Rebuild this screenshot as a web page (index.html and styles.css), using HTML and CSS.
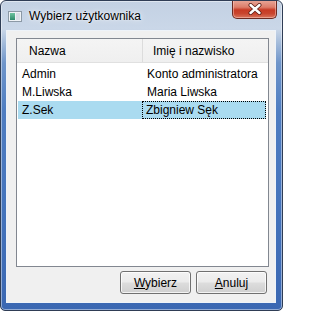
FILE: index.html
```html
<!DOCTYPE html>
<html lang="pl">
<head>
<meta charset="utf-8">
<title>Wybierz użytkownika</title>
<link rel="stylesheet" href="styles.css">
</head>
<body>
<div class="window">
  <div class="titlebar">
    <svg class="app-icon" width="14" height="11" viewBox="0 0 14 11">
      <defs>
        <linearGradient id="g1" x1="0" y1="0" x2="0" y2="1">
          <stop offset="0" stop-color="#6fc4a0"/>
          <stop offset="1" stop-color="#2e8a6a"/>
        </linearGradient>
      </defs>
      <rect x="0.5" y="0.5" width="13" height="10" fill="#eef2f6" stroke="#8c99a6"/>
      <rect x="2" y="2" width="5" height="7" fill="url(#g1)"/>
      <rect x="8" y="2" width="4" height="7" fill="#d8dee5"/>
    </svg>
    <span class="title">Wybierz użytkownika</span>
    <div class="close">
      <svg width="14" height="12" viewBox="0 0 14 12">
        <path d="M2.5 2 L11.5 10 M11.5 2 L2.5 10" stroke="#5a1c14" stroke-width="4" stroke-linecap="round" fill="none"/>
        <path d="M2.5 2 L11.5 10 M11.5 2 L2.5 10" stroke="#ffffff" stroke-width="2.4" stroke-linecap="round" fill="none"/>
      </svg>
    </div>
  </div>
  <div class="client">
    <div class="list">
      <div class="header">
        <div class="hcol hcol1">Nazwa</div>
        <div class="hcol hcol2">Imię i nazwisko</div>
      </div>
      <div class="rows">
        <div class="row">
          <div class="cell c1">Admin</div>
          <div class="cell c2">Konto administratora</div>
        </div>
        <div class="row">
          <div class="cell c1">M.Liwska</div>
          <div class="cell c2">Maria Liwska</div>
        </div>
        <div class="row selected">
          <div class="cell c1">Z.Sek</div>
          <div class="cell c2 focus">Zbigniew Sęk</div>
        </div>
      </div>
    </div>
    <div class="buttons">
      <button class="btn"><u>W</u>ybierz</button>
      <button class="btn"><u>A</u>nuluj</button>
    </div>
  </div>
</div>
</body>
</html>
```
FILE: styles.css
```css
html, body {
  margin: 0;
  padding: 0;
  background: #ffffff;
}

body {
  width: 283px;
  height: 311px;
  font-family: "Liberation Sans", Arial, sans-serif;
  font-size: 12px;
  color: #000;
}

.window {
  box-sizing: border-box;
  width: 283px;
  height: 311px;
  border: 1px solid #2f3d55;
  border-radius: 6px 6px 5px 5px;
  display: flex;
  flex-direction: column;
  overflow: hidden;
  background: linear-gradient(to bottom,
    #c3d1e3 0px,
    #cad7e8 28px,
    #a9bfdc 40px,
    #6f95ca 62px,
    #4f7dc1 110px,
    #4574bc 200px,
    #3a67b2 311px);
  box-shadow: inset 0 0 0 1px rgba(255,255,255,0.45);
}

.titlebar {
  height: 29px;
  flex: none;
  display: flex;
  align-items: center;
  padding-left: 7px;
}

.app-icon {
  flex: none;
  margin-top: 1px;
}

.title {
  margin-left: 7px;
  font-size: 12px;
  color: #000;
  text-shadow: 0 0 6px rgba(255,255,255,0.9), 0 0 2px rgba(255,255,255,0.8);
}

.close {
  margin-left: auto;
  margin-right: 5px;
  align-self: flex-start;
  margin-top: -1px;
  width: 45px;
  height: 19px;
  box-sizing: border-box;
  border: 1px solid #6b2a22;
  border-top: none;
  border-radius: 0 0 5px 5px;
  background: linear-gradient(to bottom, #e9a99a 0%, #dc7d6a 40%, #c73a24 55%, #c9452e 75%, #d9755d 100%);
  box-shadow: inset 0 0 0 1px rgba(255,220,210,0.45);
  display: flex;
  align-items: center;
  justify-content: center;
}

.client {
  flex: 1;
  margin: 0 6px 7px 5px;
  border: 1px solid #eef3f9;
  background: #f0f0f0;
  padding: 7px 6px 8px 9px;
  display: flex;
  flex-direction: column;
}

.list {
  flex: 1;
  border: 1px solid #828790;
  background: #ffffff;
  display: flex;
  flex-direction: column;
}

.header {
  display: flex;
  height: 23px;
  border-bottom: 1px solid #e0e0e0;
  background: linear-gradient(to bottom, #f4f4f4, #efefef);
}

.hcol {
  display: flex;
  align-items: center;
  box-sizing: border-box;
}

.hcol1 {
  width: 126px;
  padding-left: 12px;
  border-right: 1px solid #dcdcdc;
}

.hcol2 {
  flex: 1;
  padding-left: 10px;
}

.rows {
  padding: 2px 2px 0 1px;
}

.row {
  display: flex;
  height: 18px;
}

.cell {
  display: flex;
  align-items: center;
  box-sizing: border-box;
  white-space: nowrap;
}

.c1 {
  width: 124px;
  padding-left: 4px;
}

.c2 {
  flex: 1;
  padding-left: 4px;
  border: 1px solid transparent;
}

.row.selected {
  background: #aadbf0;
}

.c2.focus {
  border: 1px dotted #000;
  padding-left: 3px;
}

.buttons {
  margin-top: 4px;
  margin-right: 2px;
  display: flex;
  justify-content: flex-end;
  gap: 5px;
}

.btn {
  width: 71px;
  height: 23px;
  box-sizing: border-box;
  border: 1px solid #707070;
  border-radius: 3px;
  background: linear-gradient(to bottom, #f2f2f2 0%, #ebebeb 48%, #dddddd 52%, #cfcfcf 100%);
  box-shadow: inset 0 0 0 1px rgba(255,255,255,0.75);
  font-family: "Liberation Sans", Arial, sans-serif;
  font-size: 12px;
  color: #000;
  padding: 0;
}

.btn u {
  text-decoration: underline;
}
```
